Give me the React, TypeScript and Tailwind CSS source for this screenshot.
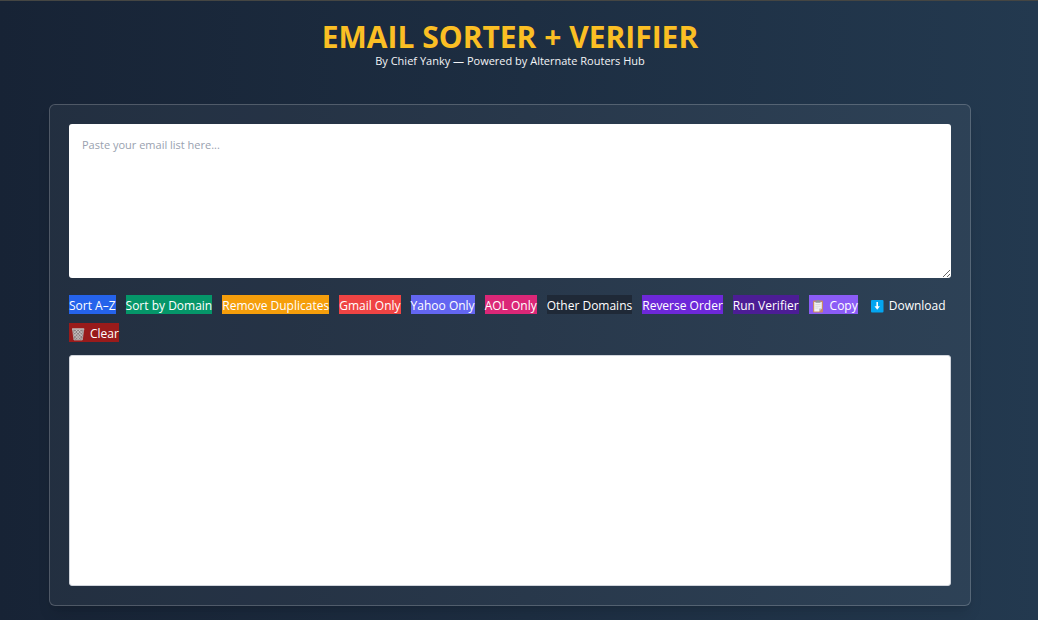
import { useState, type ReactNode } from "react";

type Action =
  | "az"
  | "domain"
  | "dedupe"
  | "gmail"
  | "yahoo"
  | "aol"
  | "other"
  | "reverse"
  | "verify"
  | "copy"
  | "download"
  | "clear";

function ClipboardIcon() {
  return (
    <svg viewBox="0 0 14 14" className="h-3.5 w-3.5" aria-hidden="true">
      <rect x="2" y="1.5" width="10" height="12" rx="1" fill="#c98a68" />
      <path d="M3.2 3h7.6v6.6l-2.6 2.9h-5z" fill="#f1f1f1" />
      <path d="M10.8 9.6 8.2 12.5V9.6z" fill="#b9b9bf" />
      <path d="M4.4 5.5h5M4.4 7.3h5M4.4 9.1h3" stroke="#c9c9d0" strokeWidth=".6" />
      <path d="M4.5 3.8V2h1.3a1.2 1.2 0 0 1 2.4 0h1.3v1.8z" fill="#8d939c" />
    </svg>
  );
}

function DownloadIcon() {
  return (
    <svg viewBox="0 0 14 14" className="h-3.5 w-3.5" aria-hidden="true">
      <rect x="1" y="1" width="12.5" height="12.5" rx="1" fill="#04a5f0" />
      <path d="M7.2 3v5.5" stroke="#fff" strokeWidth="1.6" />
      <path d="M4.5 7.2h5.4L7.2 10.8z" fill="#fff" />
    </svg>
  );
}

function TrashIcon() {
  return (
    <svg viewBox="0 0 14 14" className="h-3.5 w-3.5" aria-hidden="true">
      <path d="M1.5 2h11.3l-1.5 11H3z" fill="#8b7f7f" />
      <path
        d="M2.2 3.5 11 12.6M4.7 2.5l7 7.2M7.8 2.5l4.2 4.2M2.8 7l5.8 6M11.9 3.5 3.2 12.6M9.5 2.5l-7 7.2M6.4 2.5 2.2 6.7M11.4 7l-5.8 6"
        stroke="#d8d2d2"
        strokeWidth=".7"
      />
      <path d="M1.5 2h11.3l-1.5 11H3z" fill="none" stroke="#b4abab" strokeWidth=".8" />
      <path d="M1 2h12.2" stroke="#c4bcbc" strokeWidth="1.2" />
    </svg>
  );
}

const BUTTONS: { id: Action; label: string; color: string; icon?: ReactNode }[] = [
  { id: "az", label: "Sort A–Z", color: "bg-[#2563eb]" },
  { id: "domain", label: "Sort by Domain", color: "bg-[#059669]" },
  { id: "dedupe", label: "Remove Duplicates", color: "bg-[#f59e0b]" },
  { id: "gmail", label: "Gmail Only", color: "bg-[#ef4444]" },
  { id: "yahoo", label: "Yahoo Only", color: "bg-[#6366f1]" },
  { id: "aol", label: "AOL Only", color: "bg-[#db2777]" },
  { id: "other", label: "Other Domains", color: "bg-[#1f2937]" },
  { id: "reverse", label: "Reverse Order", color: "bg-[#6d28d9]" },
  { id: "verify", label: "Run Verifier", color: "bg-[#4c1d95]" },
  { id: "copy", label: "Copy", color: "bg-[#8b5cf6]", icon: <ClipboardIcon /> },
  { id: "download", label: "Download", color: "bg-transparent", icon: <DownloadIcon /> },
  { id: "clear", label: "Clear", color: "bg-[#991b1b]", icon: <TrashIcon /> },
];

const domainOf = (email: string) => email.split("@")[1]?.toLowerCase() ?? "";

export default function App() {
  const [input, setInput] = useState("");
  const [output, setOutput] = useState("");

  const run = (action: Action) => {
    const list = input.split(/[\s,;]+/).filter(Boolean);
    const show = (items: string[]) => setOutput(items.join("\n"));
    const known = ["gmail.com", "yahoo.com", "aol.com"];

    switch (action) {
      case "az":
        return show(list.sort((a, b) => a.localeCompare(b)));
      case "domain":
        return show(list.sort((a, b) => domainOf(a).localeCompare(domainOf(b))));
      case "dedupe":
        return show([...new Set(list)]);
      case "gmail":
      case "yahoo":
      case "aol":
        return show(list.filter((e) => domainOf(e) === `${action}.com`));
      case "other":
        return show(list.filter((e) => !known.includes(domainOf(e))));
      case "reverse":
        return show(list.reverse());
      case "verify":
        return show(list.filter((e) => /^[^\s@]+@[^\s@]+\.[^\s@]+$/.test(e)));
      case "copy":
        navigator.clipboard?.writeText(output);
        return;
      case "download": {
        const link = document.createElement("a");
        link.href = URL.createObjectURL(new Blob([output], { type: "text/plain" }));
        link.download = "emails.txt";
        link.click();
        return;
      }
      case "clear":
        setInput("");
        setOutput("");
    }
  };

  return (
    <div className="min-h-screen border-t border-[#454643] bg-linear-to-r from-[#172335] to-[#23394f] pr-[18px] font-['Open_Sans','Noto_Sans',sans-serif] text-white">
      <header className="pt-5 text-center">
        <h1 className="text-[30px] leading-8 font-bold text-[#fbbf24]">
          EMAIL SORTER + VERIFIER
        </h1>
        <p className="text-[11px] leading-4 text-gray-100">
          By Chief Yanky — Powered by Alternate Routers Hub
        </p>
      </header>

      <main className="mx-auto mt-[35px] w-[calc(100%-98px)] rounded-md border border-white/20 bg-white/5 p-[19px] shadow-lg">
        <textarea
          aria-label="Email list"
          placeholder="Paste your email list here..."
          value={input}
          onChange={(e) => setInput(e.target.value)}
          className="block h-[154px] w-full resize-y rounded-[3px] bg-white p-[13px] text-[11px] leading-4 text-gray-900 placeholder:text-gray-400 focus:outline-none"
        />

        {/* Actions */}
        <div className="mt-[17px] flex flex-wrap gap-x-[10px] gap-y-[9px]">
          {BUTTONS.map(({ id, label, color, icon }) => (
            <button
              key={id}
              type="button"
              onClick={() => run(id)}
              className={`flex items-center gap-[5px] pt-[2px] text-[12px] leading-[17px] font-medium whitespace-nowrap text-white ${icon ? "pl-[2px]" : ""} ${color}`}
            >
              {icon}
              {label}
            </button>
          ))}
        </div>

        <textarea
          aria-label="Result"
          readOnly
          value={output}
          className="mt-[13px] block h-[231px] w-full resize-none rounded-[3px] border border-gray-300 bg-white p-3 text-[11px] leading-4 text-gray-900 focus:outline-none"
        />
      </main>
    </div>
  );
}
